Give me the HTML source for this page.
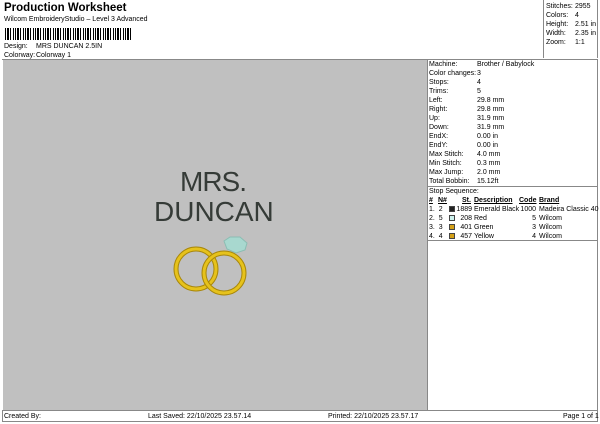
<!DOCTYPE html>
<html><head><style>
*{margin:0;padding:0;box-sizing:border-box}
body{width:600px;height:424px;background:#fff;font-family:"Liberation Sans",sans-serif;position:relative;overflow:hidden;color:#000}
.a{position:absolute;white-space:nowrap;font-size:7px;line-height:9px}
.bar{position:absolute;left:5px;top:28px;width:126px;height:12px;background:repeating-linear-gradient(90deg,#000 0 1px,#fff 1px 2px,#000 2px 4px,#fff 4px 5px,#000 5px 6px,#fff 6px 8px,#000 8px 9px,#fff 9px 10px)}
.sw{display:inline-block;width:6px;height:6px;border:1px solid #444;vertical-align:-1px}
</style></head><body>
<div class="a" style="left:4px;top:1px;font-size:11.5px;line-height:14px;font-weight:bold">Production Worksheet</div>
<div class="a" style="left:4px;top:15px">Wilcom EmbroideryStudio – Level 3 Advanced</div>
<div class="bar"></div>
<div class="a" style="left:4px;top:42px">Design:</div><div class="a" style="left:36px;top:42px">MRS DUNCAN 2.5IN</div>
<div class="a" style="left:4px;top:51px">Colorway:</div><div class="a" style="left:36px;top:51px">Colorway 1</div>
<div style="position:absolute;left:543px;top:0;width:55px;height:58px;border-left:1px solid #888;border-right:1px solid #888"></div>
<div class="a" style="left:546px;top:2px;line-height:9px">Stitches:<br>Colors:<br>Height:<br>Width:<br>Zoom:</div>
<div class="a" style="left:575px;top:2px;line-height:9px">2955<br>4<br>2.51 in<br>2.35 in<br>1:1</div>
<div style="position:absolute;left:2px;top:59px;width:596px;height:1px;background:#888"></div>
<div style="position:absolute;left:3px;top:60px;width:424px;height:350px;background:#c0c0c0"></div>
<div style="position:absolute;left:427px;top:60px;width:171px;height:350px;border-left:1px solid #888;border-right:1px solid #888"></div>
<div style="position:absolute;left:427px;top:186px;width:171px;height:1px;background:#888"></div>
<div style="position:absolute;left:427px;top:240px;width:171px;height:1px;background:#888"></div>
<div class="a" style="left:429px;top:60px">Machine:<br>Color changes:<br>Stops:<br>Trims:<br>Left:<br>Right:<br>Up:<br>Down:<br>EndX:<br>EndY:<br>Max Stitch:<br>Min Stitch:<br>Max Jump:<br>Total Bobbin:</div>
<div class="a" style="left:477px;top:60px">Brother / Babylock<br>3<br>4<br>5<br>29.8 mm<br>29.8 mm<br>31.9 mm<br>31.9 mm<br>0.00 in<br>0.00 in<br>4.0 mm<br>0.3 mm<br>2.0 mm<br>15.12ft</div>
<div class="a" style="left:429px;top:187px">Stop Sequence:</div>
<div class="a" style="left:429px;top:196px;font-weight:bold;text-decoration:underline">#</div>
<div class="a" style="left:438px;top:196px;font-weight:bold;text-decoration:underline">N#</div>
<div class="a" style="left:462px;top:196px;font-weight:bold;text-decoration:underline">St.</div>
<div class="a" style="left:474px;top:196px;font-weight:bold;text-decoration:underline">Description</div>
<div class="a" style="left:519px;top:196px;font-weight:bold;text-decoration:underline">Code</div>
<div class="a" style="left:539px;top:196px;font-weight:bold;text-decoration:underline">Brand</div>
<div class="a" style="left:429px;top:205px;line-height:9px">1.&nbsp; 2<br>2.&nbsp; 5<br>3.&nbsp; 3<br>4.&nbsp; 4</div>
<div class="a" style="left:449px;top:205px;line-height:9px"><span class="sw" style="background:#222"></span><br><span class="sw" style="background:#cdf2ee"></span><br><span class="sw" style="background:#d4a017"></span><br><span class="sw" style="background:#d4a017"></span></div>
<div class="a" style="left:456px;top:205px;width:16px;text-align:right;line-height:9px">1889<br>208<br>401<br>457</div>
<div class="a" style="left:474px;top:205px;line-height:9px">Emerald Black<br>Red<br>Green<br>Yellow</div>
<div class="a" style="left:518px;top:205px;width:18px;text-align:right;line-height:9px">1000<br>5<br>3<br>4</div>
<div class="a" style="left:539px;top:205px;line-height:9px">Madeira Classic 40<br>Wilcom<br>Wilcom<br>Wilcom</div>
<div class="a" style="left:180px;top:167px;font-size:28px;line-height:30px;color:#353b37;letter-spacing:-1px">MRS.</div>
<div class="a" style="left:154px;top:197px;font-size:28px;line-height:30px;color:#353b37;letter-spacing:0px">DUNCAN</div>
<svg style="position:absolute;left:170px;top:232px" width="90" height="70">
<polygon points="54,9 60,5 70,5 77,11 75,18 66,21 57,17" fill="#a8d8cf" stroke="#8bbdb3"/>
<circle cx="26" cy="37" r="20" fill="none" stroke="#a8870a" stroke-width="5"/>
<circle cx="26" cy="37" r="20" fill="none" stroke="#e6c21c" stroke-width="3"/>
<circle cx="54" cy="41" r="20" fill="none" stroke="#a8870a" stroke-width="5"/>
<circle cx="54" cy="41" r="20" fill="none" stroke="#e6c21c" stroke-width="3"/>
</svg>
<div style="position:absolute;left:2px;top:410px;width:596px;height:12px;border:1px solid #888"></div>
<div class="a" style="left:4px;top:412px">Created By:</div>
<div class="a" style="left:148px;top:412px">Last Saved: 22/10/2025 23.57.14</div>
<div class="a" style="left:328px;top:412px">Printed: 22/10/2025 23.57.17</div>
<div class="a" style="left:563px;top:412px">Page 1 of 1</div>
</body></html>
